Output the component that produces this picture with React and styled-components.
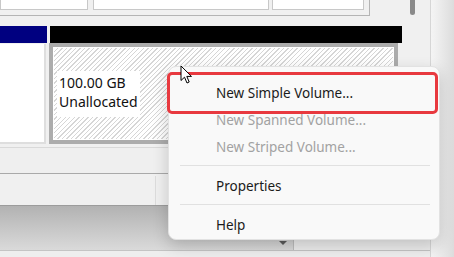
import React from 'react'
import styled, { createGlobalStyle } from 'styled-components'

const GlobalStyle = createGlobalStyle`
  html, body {
    margin: 0;
    padding: 0;
    background: #f0f0f0;
    overflow: hidden;
  }
  body {
    font-family: 'Noto Sans', 'Liberation Sans', sans-serif;
  }
`

const Screen = styled.div`
  position: relative;
  width: 454px;
  height: 257px;
  display: flex;
  overflow: hidden;
  background: #f0f0f0;
`

const Main = styled.div`
  width: 430px;
  display: flex;
  flex-direction: column;
`

const RightEdge = styled.div`
  width: 24px;
  border-left: 1px solid #d6d6d6;
  background: linear-gradient(to right, #f4f4f4 0px, #f1f1f1 4px, #dcdcdc 100%);
`

const Upper = styled.div`
  height: 147px;
  display: flex;
  border-bottom: 1px solid #d9d9d9;
`

const DiskView = styled.div`
  width: 410px;
  display: flex;
  flex-direction: column;
`

const HeaderRow = styled.div`
  width: 369px;
  height: 15px;
  display: flex;
  border-right: 1px solid #b4b4b4;
  border-bottom: 1px solid #b4b4b4;
  box-sizing: content-box;
`

const Cell = styled.div`
  width: ${p => p.$w}px;
  margin-right: ${p => p.$gap || 0}px;
  height: 10px;
  background: #fff;
  border: 1px solid #c8c8c8;
  border-top: none;
  box-sizing: border-box;
`

const BarRow = styled.div`
  margin-top: 10px;
  height: 17px;
  display: flex;
  gap: 3px;
`

const Bar = styled.div`
  width: ${p => p.$w}px;
  background: ${p => p.$color};
`

const PaneRow = styled.div`
  flex: 1;
  display: flex;
  gap: 3px;
  padding-bottom: 3px;
`

const LeftPane = styled.div`
  width: 44px;
  background: #fff;
  border-right: 2px solid #dedede;
  border-bottom: 2px solid #dedede;
  margin-top: 1px;
`

const HatchFrame = styled.div`
  width: 349px;
  border: 4px solid #acacac;
  box-sizing: border-box;
  padding: 1px;
  background: #fff;
  display: flex;
`

const Hatch = styled.div`
  flex: 1;
  padding: 23px 0 0 3px;
  background: repeating-linear-gradient(
    135deg,
    #fff 0px,
    #fff 2.2px,
    #d6d6d6 2.2px,
    #d6d6d6 3.2px
  );
`

const Label = styled.div`
  display: inline-block;
  background: #fff;
  padding: 2px 2px 6px 2px;
  font-size: 14px;
  line-height: 19px;
  color: #111;
`

const ScrollCol = styled.div`
  width: 20px;
  padding-left: 4px;
`

const Thumb = styled.div`
  width: 5px;
  height: 15px;
  border-radius: 0 0 3px 3px;
  background: #8a8a8a;
`

const StatusA = styled.div`
  height: 25px;
  background: #efefef;
  border-bottom: 1px solid #a9a9a9;
`

const StatusB = styled.div`
  height: 29px;
  margin-top: 2px;
  display: flex;
  background: #f0f0f0;
  border-bottom: 1px solid #9c9c9c;
`

const StatusCell = styled.div`
  width: 155px;
  border-right: 1px solid #dcdcdc;
`

const ShadeRow = styled.div`
  height: 44px;
  display: flex;
  border-bottom: 1px solid #c4c4c4;
`

const ShadePane = styled.div`
  width: 294px;
  border-right: 1px solid #bdbdbd;
  background: linear-gradient(to bottom, #b2b2b2, #dadada);
  display: flex;
  justify-content: flex-end;
  align-items: flex-end;
  padding: 0 6px 5px 0;
  box-sizing: border-box;
`

const DropArrow = styled.div`
  width: 0;
  height: 0;
  border-left: 4px solid transparent;
  border-right: 4px solid transparent;
  border-top: 4px solid #5a5a5a;
`

const LightPane = styled.div`
  flex: 1;
  background: #ececec;
`

const Footer = styled.div`
  flex: 1;
  background: #eeeeee;
`

const Menu = styled.div`
  position: absolute;
  left: 168px;
  top: 66px;
  width: 272px;
  height: 174px;
  box-sizing: border-box;
  padding: 12px 0 1px;
  background: #f9f9f9;
  border: 1px solid #e2e2e2;
  border-radius: 8px;
  box-shadow: 0 6px 16px rgba(0, 0, 0, 0.18);
  display: flex;
  flex-direction: column;
`

const Item = styled.div`
  height: 27px;
  flex-shrink: 0;
  display: flex;
  align-items: center;
  padding-left: 47px;
  font-size: 13.5px;
  color: ${p => (p.$disabled ? '#a2a2a2' : '#1b1b1b')};
`

const Separator = styled.div`
  height: 1px;
  flex-shrink: 0;
  margin: 5px 9px 6px 11px;
  background: #e1e1e1;
`

const Highlight = styled.div`
  position: absolute;
  left: 167px;
  top: 72px;
  width: 271px;
  height: 42px;
  box-sizing: border-box;
  border: 3px solid #e8393f;
  border-radius: 5px;
`

const Cursor = styled.svg`
  position: absolute;
  left: 180px;
  top: 65px;
`

export default function App() {
  return (
    <>
      <GlobalStyle />
      <Screen>
        <Main>
          <Upper>
            <DiskView>
              <HeaderRow>
                <Cell $w={88} $gap={5} />
                <Cell $w={176} $gap={3} />
                <Cell $w={92} />
              </HeaderRow>
              <BarRow>
                <Bar $w={47} $color='#000080' />
                <Bar $w={352} $color='#000' />
              </BarRow>
              <PaneRow>
                <LeftPane />
                <HatchFrame>
                  <Hatch>
                    <Label>
                      100.00 GB<br />Unallocated
                    </Label>
                  </Hatch>
                </HatchFrame>
              </PaneRow>
            </DiskView>
            <ScrollCol>
              <Thumb />
            </ScrollCol>
          </Upper>
          <StatusA />
          <StatusB>
            <StatusCell />
          </StatusB>
          <ShadeRow>
            <ShadePane>
              <DropArrow />
            </ShadePane>
            <LightPane />
          </ShadeRow>
          <Footer />
        </Main>
        <RightEdge />

        <Menu>
          <Item>New Simple Volume...</Item>
          <Item $disabled>New Spanned Volume...</Item>
          <Item $disabled>New Striped Volume...</Item>
          <Separator />
          <Item>Properties</Item>
          <Separator />
          <Item>Help</Item>
        </Menu>
        <Highlight />
        <Cursor width='14' height='20' viewBox='0 0 14 20'>
          <path
            d='M1 1 L1 15.5 L4.5 12.2 L7 18 L9.2 17 L6.8 11.4 L11.5 11.4 Z'
            fill='#fff'
            stroke='#000'
            strokeWidth='1'
            strokeLinejoin='round'
          />
        </Cursor>
      </Screen>
    </>
  )
}
